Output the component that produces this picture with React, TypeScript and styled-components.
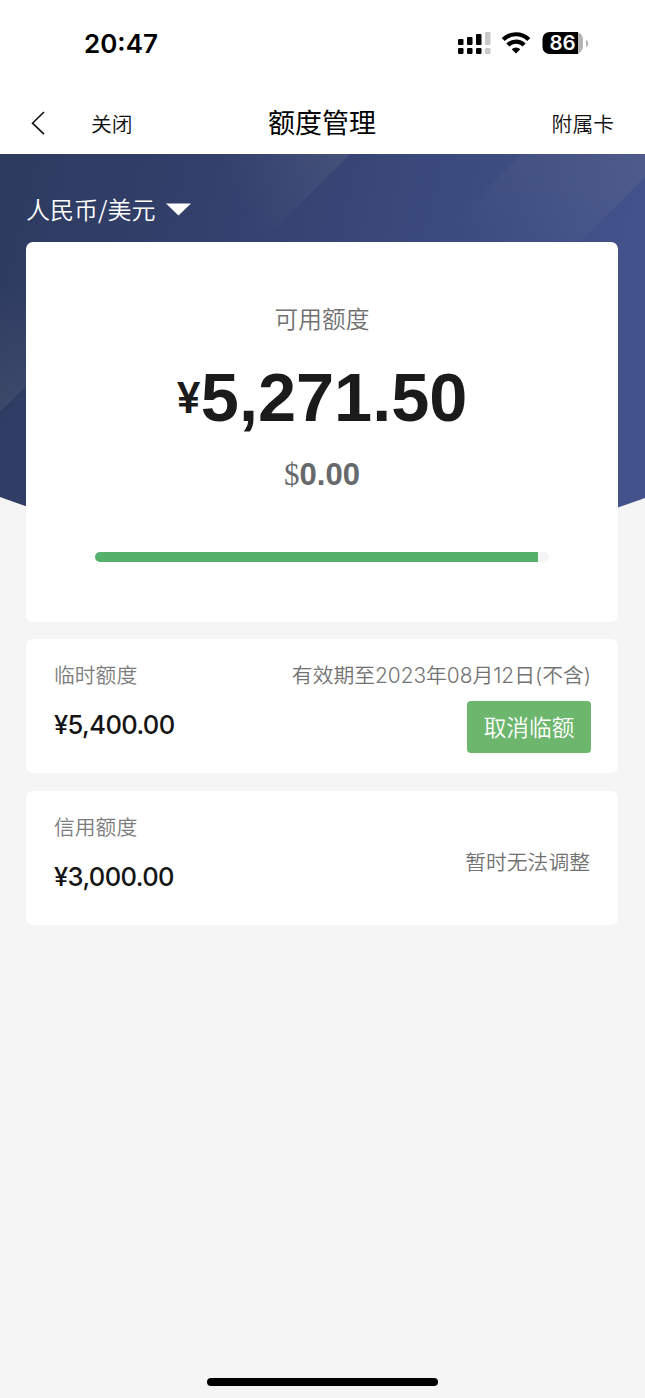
import React from "react";
import styled, { createGlobalStyle } from "styled-components";

const GlobalStyle = createGlobalStyle`
  *, *::before, *::after { box-sizing: border-box; }
  body {
    margin: 0;
    background: #f5f5f5;
    font-family: "Noto Sans CJK SC", sans-serif;
    font-weight: 350;
    color: #1c1c1c;
  }
`;

const Screen = styled.div`
  width: 645px;
  height: 1398px;
  display: flex;
  flex-direction: column;
  overflow: hidden;
  background: #f5f5f5;
`;

const StatusBar = styled.header`
  height: 92px;
  padding: 0 56px 4px 84px;
  display: flex;
  align-items: center;
  justify-content: space-between;
  background: #fff;
`;

const Clock = styled.time`
  font: 600 26px/32px Inter, sans-serif;
  color: #000;
`;

const StatusIcons = styled.svg`
  display: block;
`;

const NavBar = styled.nav`
  height: 62px;
  padding: 0 31px 0 30px;
  display: grid;
  grid-template-columns: 1fr auto 1fr;
  align-items: center;
  background: #fff;
`;

const NavLeft = styled.div`
  display: flex;
  align-items: center;
  gap: 45px;
`;

const NavAction = styled.span<{ $end?: boolean }>`
  font-size: 20.8px;
  line-height: 30px;
  color: #111;
  justify-self: ${(p) => (p.$end ? "end" : "start")};
`;

const NavTitle = styled.h1`
  margin: 0 0 2px;
  font-size: 27px;
  line-height: 36px;
  font-weight: 400;
  color: #000;
`;

const Main = styled.main`
  position: relative;
  flex: 1;
  padding: 0 27px 0 26px;
  display: flex;
  flex-direction: column;
`;

const Backdrop = styled.svg`
  position: absolute;
  left: 0;
  top: 0;
`;

const CurrencyPicker = styled.div`
  position: relative;
  height: 88px;
  padding: 22px 0 0 0;
  display: flex;
  align-items: center;
  align-self: flex-start;
  gap: 11px;
  font-size: 24px;
  line-height: 36px;
  color: #fff;
`;

const Card = styled.section`
  position: relative;
  background: #fff;
  border-radius: 7px;
`;

const SummaryCard = styled(Card)`
  height: 380px;
  padding-top: 58px;
  display: flex;
  flex-direction: column;
  align-items: center;
`;

const SummaryLabel = styled.div`
  font-size: 23.7px;
  line-height: 36px;
  color: #707070;
`;

const Amount = styled.div`
  height: 76px;
  margin-top: 24px;
  display: flex;
  align-items: baseline;
  font: 700 68.5px/76px "Liberation Sans", sans-serif;
  color: #1b1b1b;
`;

const Yen = styled.span`
  margin-bottom: 13px;
  align-self: flex-end;
  font: 600 43px/52px Inter, sans-serif;
`;

const DollarAmount = styled.div`
  height: 36px;
  margin-top: 21px;
  display: flex;
  align-items: baseline;
  font: 700 31px/36px "Liberation Sans", sans-serif;
  color: #66696c;
`;

const Dollar = styled.span`
  font: 400 31px/36px "Liberation Serif", serif;
`;

const Track = styled.div`
  width: 454px;
  height: 10px;
  margin-top: 59px;
  border-radius: 5px;
  overflow: hidden;
  background: #f5f5f5;
`;

const Fill = styled.div`
  height: 100%;
  background: #54b16c;
`;

const LimitCard = styled(Card)<{ $gap: number }>`
  height: 134px;
  margin-top: ${(p) => p.$gap}px;
  padding: 20px 27px 0 28px;
  display: flex;
  justify-content: space-between;
`;

const LimitInfo = styled.div`
  display: flex;
  flex-direction: column;
  gap: 19px;
`;

const LimitSide = styled.div<{ $top?: number }>`
  display: flex;
  flex-direction: column;
  align-items: flex-end;
  gap: 11px;
  padding-top: ${(p) => p.$top ?? 0}px;
`;

const Label = styled.span`
  font-size: 20.8px;
  line-height: 31px;
  color: #7c7c7c;
`;

const Note = styled(Label)`
  margin-right: 1px;
  color: #727272;
`;

const Expiry = styled(Label)`
  padding-top: 1px;
  margin-bottom: -1px;
  font-family: Inter, "Noto Sans CJK SC", sans-serif;
  font-weight: 350;
  color: #737373;
`;

const LimitValue = styled.span`
  font: 500 25.5px/32px Inter, sans-serif;
  letter-spacing: -0.6px;
  color: #151515;
`;

const CancelButton = styled.button`
  width: 124px;
  height: 52px;
  padding: 0;
  border: 0;
  border-radius: 4px;
  background: #6cb66e;
  color: #fff;
  font: 350 22.7px/52px "Noto Sans CJK SC", sans-serif;
`;

const HomeIndicator = styled.div`
  width: 231px;
  height: 8px;
  margin: auto 0 12px 181px;
  border-radius: 4px;
  background: #000;
`;

const SIGNAL = [
  { x: 0, top: 7, color: "#000" },
  { x: 9, top: 5, color: "#000" },
  { x: 18, top: 2, color: "#000" },
  { x: 27, top: 0, color: "#c8c8c8" },
];

export default function App() {
  return (
    <Screen>
      <GlobalStyle />
      <StatusBar>
        <Clock>20:47</Clock>
        <StatusIcons width="132" height="32" viewBox="0 -4 132 32">
          {SIGNAL.map((bar) => (
            <g key={bar.x} fill={bar.color}>
              <rect x={bar.x + 1} y={bar.top} width="5.5" height={13 - bar.top} rx="1" />
              <rect x={bar.x + 1} y="16" width="5.5" height="6" rx="1.2" />
            </g>
          ))}
          <g fill="none" stroke="#000" strokeWidth="4.2">
            <path d="M46.2 7.600a18 18 0 0 1 25.6 0" />
            <path d="M50.8 13a11.6 11.6 0 0 1 16.4 0" />
          </g>
          <path d="M54.700 17.200a6.200 6.200 0 0 1 8.600 0L59 21.400z" fill="#000" />
          <path d="M92 0h26.500a7.500 7 0 0 1 7.500 7v7.500a7.500 7.500 0 0 1-7.500 7.500H92z" fill="#b4b4b4" />
          <path d="M92.500 0H121v22H92.500a7 7 0 0 1-7-7V7a7 7 0 0 1 7-7z" fill="#000" />
          <path d="M129 8c3 1 3 6 0 7z" fill="#b4b4b4" />
          <text x="105.500" y="18" textAnchor="middle" fontFamily="Inter, sans-serif" fontSize="20.5" fontWeight="600" fill="#fff">
            86
          </text>
        </StatusIcons>
      </StatusBar>

      <NavBar>
        <NavLeft>
          <svg width="16" height="26" viewBox="0 0 16 26" fill="none" stroke="#111" strokeWidth="1.6">
            <path d="M14 2 2.500 13.200 14 24.200" />
          </svg>
          <NavAction>关闭</NavAction>
        </NavLeft>
        <NavTitle>额度管理</NavTitle>
        <NavAction $end>附属卡</NavAction>
      </NavBar>

      <Main>
        <Backdrop width="645" height="400" viewBox="0 0 645 400">
          <defs>
            <linearGradient id="base" x1="0" y1="0" x2="1" y2="0.15">
              <stop offset="0" stopColor="#2e3b60" />
              <stop offset="0.25" stopColor="#313e68" />
              <stop offset="0.55" stopColor="#384677" />
              <stop offset="1" stopColor="#43528b" />
            </linearGradient>
            <linearGradient id="beamMid" gradientUnits="userSpaceOnUse" x1="340" y1="0" x2="240" y2="50">
              <stop offset="0" stopColor="#e0e0a8" stopOpacity="0.07" />
              <stop offset="1" stopColor="#e0e0a8" stopOpacity="0" />
            </linearGradient>
            <linearGradient id="beamRight" gradientUnits="userSpaceOnUse" x1="640" y1="0" x2="510" y2="130">
              <stop offset="0" stopColor="#e0e0a8" stopOpacity="0.07" />
              <stop offset="1" stopColor="#e0e0a8" stopOpacity="0" />
            </linearGradient>
            <linearGradient id="beamLeft" gradientUnits="userSpaceOnUse" x1="20" y1="240" x2="0" y2="130">
              <stop offset="0" stopColor="#e0e0a8" stopOpacity="0.07" />
              <stop offset="1" stopColor="#e0e0a8" stopOpacity="0" />
            </linearGradient>
          </defs>
          <path d="M0 0H645V344Q322 462 0 343Z" fill="url(#base)" />
          <path d="M350 0 262 88H180V0Z" fill="url(#beamMid)" />
          <path d="M522 0H645V23L580 88H434Z" fill="url(#beamRight)" />
          <path d="M0 258 26 232V120H0Z" fill="url(#beamLeft)" />
        </Backdrop>

        <CurrencyPicker>
          人民币/美元
          <svg width="25" height="13" viewBox="0 0 25 13" fill="#fff">
            <path d="M0 0.500h25L12.500 12.500z" />
          </svg>
        </CurrencyPicker>

        <SummaryCard>
          <SummaryLabel>可用额度</SummaryLabel>
          <Amount>
            <Yen>¥</Yen>5,271.50
          </Amount>
          <DollarAmount>
            <Dollar>$</Dollar>0.00
          </DollarAmount>
          <Track>
            <Fill style={{ width: `${(5271.5 / 5400) * 100}%` }} />
          </Track>
        </SummaryCard>

        <LimitCard $gap={17}>
          <LimitInfo>
            <Label>临时额度</Label>
            <LimitValue>¥5,400.00</LimitValue>
          </LimitInfo>
          <LimitSide>
            <Expiry>有效期至2023年08月12日(不含)</Expiry>
            <CancelButton>取消临额</CancelButton>
          </LimitSide>
        </LimitCard>

        <LimitCard $gap={18}>
          <LimitInfo>
            <Label>信用额度</Label>
            <LimitValue>¥3,000.00</LimitValue>
          </LimitInfo>
          <LimitSide $top={35}>
            <Note>暂时无法调整</Note>
          </LimitSide>
        </LimitCard>

        <HomeIndicator />
      </Main>
    </Screen>
  );
}
